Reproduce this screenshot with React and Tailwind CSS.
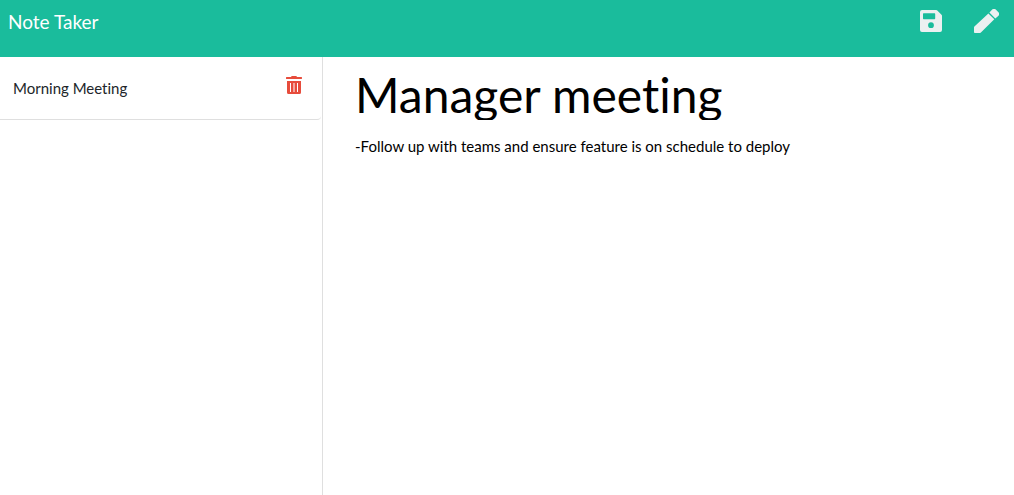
const notes = [{ id: 1, title: "Morning Meeting" }];

function SaveIcon() {
  return (
    <svg width="22" height="22" viewBox="0 0 22 22" fill="currentColor" fillRule="evenodd" aria-hidden="true">
      <path d="M2 0H16.200c.4 0 .8.200 1.100.5l4.200 4.200c.3.3.5.7.5 1.100V20A2 2 0 0 1 20 22H2A2 2 0 0 1 0 20V2A2 2 0 0 1 2 0ZM3.600 3.300a.6.6 0 0 0-.6.6V8.600c0 .3.3.6.6.6H14.600c.3 0 .6-.3.6-.6V3.900a.6.6 0 0 0-.6-.6ZM11 12.300a2.900 2.900 0 1 0 0 5.800 2.900 2.900 0 0 0 0-5.800Z" />
    </svg>
  );
}

function PencilIcon() {
  return (
    <svg width="25" height="24" viewBox="0 0 25 24" fill="currentColor" aria-hidden="true">
      <path d="M14.4 4.4 20.3 10.3 6.9 23.6c-.2.3-.5.4-.8.4H.8c-.4 0-.8-.4-.8-.8V18.6c0-.4.1-.7.4-1Z" />
      <path d="m15.4 3.4 2.6-2.6a2.8 2.8 0 0 1 4 0l2.2 2.2a2.8 2.8 0 0 1 0 4L21.3 9.4Z" />
    </svg>
  );
}

function TrashIcon() {
  return (
    <svg width="16" height="18" viewBox="0 0 16 18" fill="currentColor" fillRule="evenodd" aria-hidden="true">
      <path d="M5 1 5.5.3C5.6.1 5.9 0 6.1 0H9.9c.2 0 .5.1.6.3L11 1h4.4c.4 0 .6.3.6.6V2.500c0 .3-.2.5-.5.5H.5A.5.5 0 0 1 0 2.500V1.600C0 1.300.2 1 .6 1Z" />
      <path d="M1 5H15V16.500A1.500 1.500 0 0 1 13.500 18H2.500A1.500 1.500 0 0 1 1 16.500ZM4 7V16H5V7ZM7.500 7V16H8.500V7ZM11 7V16H12V7Z" />
    </svg>
  );
}

export default function App() {
  return (
    <div className="flex min-h-screen flex-col bg-white font-['Lato',sans-serif] text-[15px] leading-6 text-[#212529] [font-variant-ligatures:none]">
      <nav className="flex h-[57px] items-start justify-between bg-[#1abc9c] px-2 pt-2">
        <a href="#" className="text-[19px] leading-7 text-white">Note Taker</a>
        <div className="flex items-center gap-8 pr-[7px] pt-px text-[#ecf0f1]">
          <button type="button" aria-label="Save note"><SaveIcon /></button>
          <button type="button" aria-label="New note"><PencilIcon /></button>
        </div>
      </nav>
      <main className="flex grow">
        <aside className="w-[323px] shrink-0 border-r border-[#dfdfdf]">
          <ul>
            {notes.map((note) => (
              <li key={note.id} className="mr-px flex items-start justify-between rounded-br border-b border-[#dfdfdf] py-[19px] pl-[13px] pr-[19px]">
                <span>{note.title}</span>
                <button type="button" aria-label="Delete note" className="text-[#e74c3c]"><TrashIcon /></button>
              </li>
            ))}
          </ul>
        </aside>
        <section className="flex grow flex-col pl-8 pr-4 pt-3">
          <input aria-label="Note title" defaultValue="Manager meeting" className="h-[51px] w-full text-[48px] leading-[51px] text-black outline-none" />
          <textarea aria-label="Note text" defaultValue="-Follow up with teams and ensure feature is on schedule to deploy" className="mt-[14px] w-full grow resize-none text-black outline-none" />
        </section>
      </main>
    </div>
  );
}
